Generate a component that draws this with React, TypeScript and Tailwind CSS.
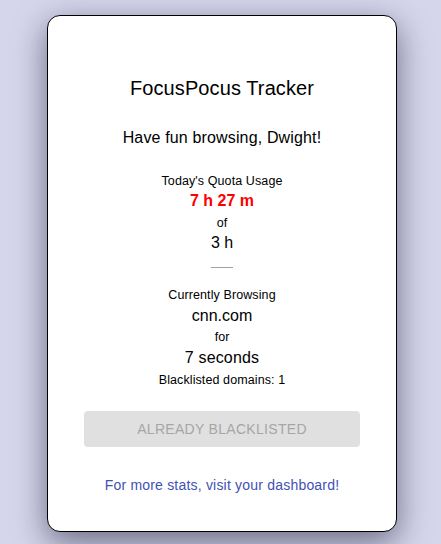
export default function App() {
  const quotaUsed = '7 h 27 m'
  const quota = '3 h'
  const domain = 'cnn.com'
  const duration = '7 seconds'
  const blacklistedCount = 1

  return (
    <main
      className="min-h-[544px] bg-[#d5d5eb] pt-[15px] pl-[47px] text-black"
      style={{ fontFamily: '"Liberation Sans", Arial, sans-serif' }}
    >
      <div className="flex w-[350px] h-[517px] flex-col items-center rounded-[13px] border border-black bg-white shadow-[0_10px_32px_rgba(20,20,50,0.55)]">
        <h1 className="mt-[60px] text-[20px] leading-[24px] font-normal tracking-[0.1px]">FocusPocus Tracker</h1>
        <p className="mt-[28px] text-[16px] leading-[20px] tracking-[0.15px]">Have fun browsing, Dwight!</p>

        <p className="mt-[25px] text-[12.5px] leading-[16px] tracking-[0.1px]">Today's Quota Usage</p>
        <p className="mt-[2px] text-[16px] leading-[20px] font-bold text-[#ff0000]">{quotaUsed}</p>
        <p className="mt-[4px] text-[12.5px] leading-[16px]">of</p>
        <p className="mt-[2px] text-[16px] leading-[20px]">{quota}</p>

        <hr className="mt-[14px] w-[22px] border-t border-[#a0a0a0]" />

        <p className="mt-[19px] text-[12.5px] leading-[16px] tracking-[0.1px]">Currently Browsing</p>
        <p className="mt-[3px] text-[16px] leading-[20px]">{domain}</p>
        <p className="mt-[3px] text-[12.5px] leading-[16px]">for</p>
        <p className="mt-[3px] text-[16px] leading-[20px] tracking-[0.15px]">{duration}</p>
        <p className="mt-[4px] text-[12.5px] leading-[16px] tracking-[0.1px]">Blacklisted domains: {blacklistedCount}</p>

        <button
          disabled
          className="mt-[23px] h-[36px] w-[276px] rounded-[4px] bg-[#e0e0e0] text-[14px] uppercase tracking-[0.3px] text-[#a6a6a6]"
        >
          Already Blacklisted
        </button>

        <a href="#" className="mt-[28px] text-[14px] leading-[20px] tracking-[0.2px] text-[#3f51b5]">
          For more stats, visit your dashboard!
        </a>
      </div>
    </main>
  )
}
